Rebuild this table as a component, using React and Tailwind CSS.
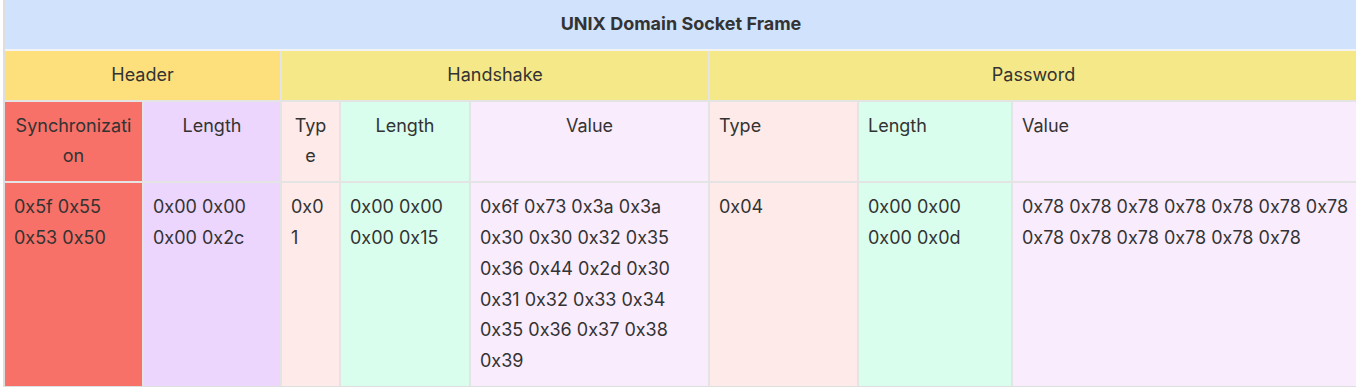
const cell = 'p-[9px] break-words';

const rows = {
    header: [
        { label: 'Synchronization', bg: 'bg-[#f87168]', center: true },
        { label: 'Length', bg: 'bg-[#ecd6fd]', center: true },
        { label: 'Type', bg: 'bg-[#feeae9]', center: true },
        { label: 'Length', bg: 'bg-[#dafeee]', center: true },
        { label: 'Value', bg: 'bg-[#f9ecfd]', center: true },
        { label: 'Type', bg: 'bg-[#feeae9]' },
        { label: 'Length', bg: 'bg-[#dafeee]' },
        { label: 'Value', bg: 'bg-[#f9ecfd] pr-0' },
    ],
    data: [
        '0x5f 0x55 0x53 0x50',
        '0x00 0x00 0x00 0x2c',
        '0x01',
        '0x00 0x00 0x00 0x15',
        '0x6f 0x73 0x3a 0x3a 0x30 0x30 0x32 0x35 0x36 0x44 0x2d 0x30 0x31 0x32 0x33 0x34 0x35 0x36 0x37 0x38 0x39',
        '0x04',
        '0x00 0x00 0x00 0x0d',
        '0x78 0x78 0x78 0x78 0x78 0x78 0x78 0x78 0x78 0x78 0x78 0x78 0x78',
    ],
};

const App = () => {
    return (
        <div className="w-full overflow-hidden bg-white">
            <div
                className="pl-[3px] w-[1357px] text-[18px] leading-[30.8px] text-[#333]"
                style={{ fontFamily: 'Inter, "Noto Sans", sans-serif' }}
            >
                <div className="border-l-2 border-b-2 border-[#dedede]">
                    <div className="bg-[#d0e2fc] p-[9px] text-center font-bold border-b-2 border-[#f3f3f3]">
                        UNIX Domain Socket Frame
                    </div>
                    <div className="grid grid-cols-[137px_136px_57px_128px_237px_147px_152px_344px] gap-[2px] bg-[#e4e4e4]">
                        <div className={`${cell} col-span-2 text-center bg-[#fde07c]`}>Header</div>
                        <div className={`${cell} col-span-3 text-center bg-[#f5e888]`}>Handshake</div>
                        <div className={`${cell} col-span-3 text-center bg-[#f5e888]`}>Password</div>

                        {rows.header.map((h, i) => (
                            <div key={`h${i}`} className={`${cell} ${h.bg} ${h.center ? 'text-center' : ''}`}>
                                {h.label}
                            </div>
                        ))}

                        {rows.data.map((d, i) => (
                            <div key={`d${i}`} className={`${cell} ${rows.header[i].bg}`}>
                                {d}
                            </div>
                        ))}
                    </div>
                </div>
            </div>
        </div>
    );
};

export default App;
